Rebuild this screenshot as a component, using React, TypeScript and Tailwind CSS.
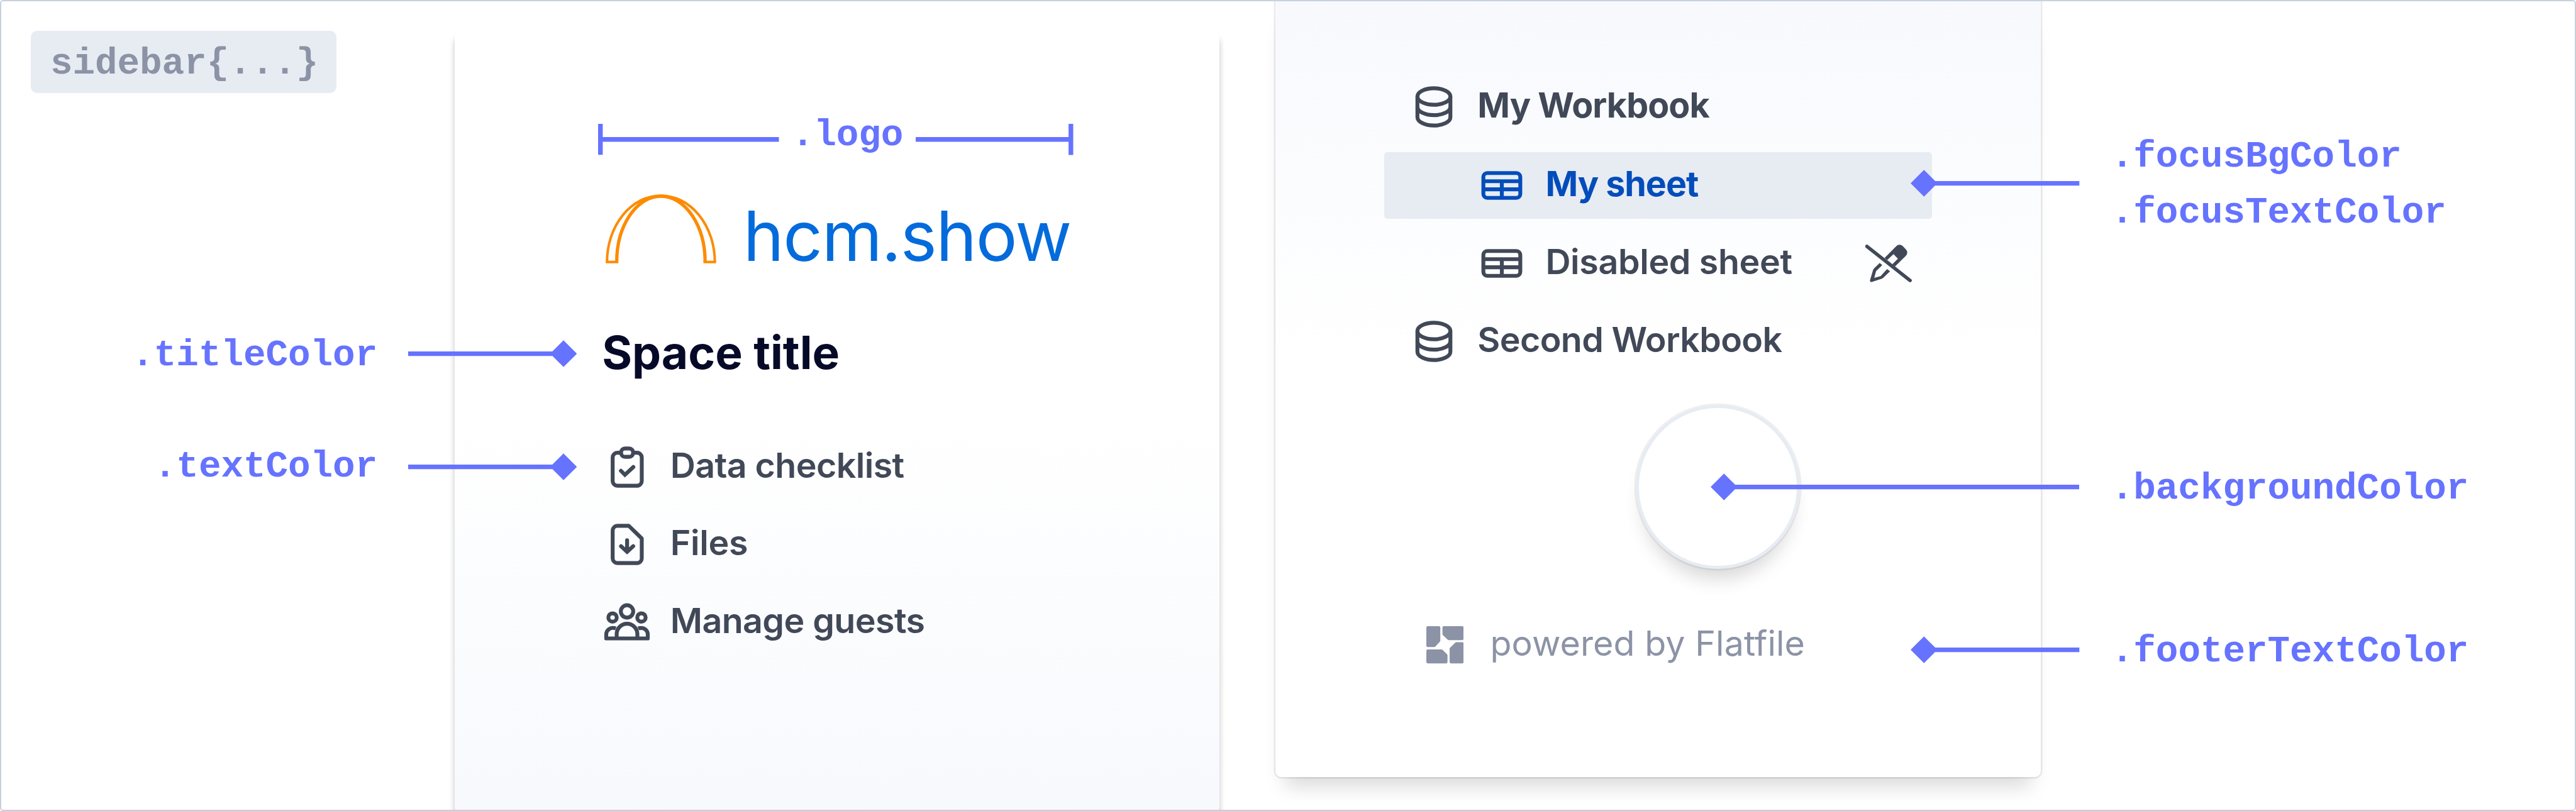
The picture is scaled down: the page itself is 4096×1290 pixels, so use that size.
import type { ReactNode } from "react";

const ICON = "h-[74px] w-[74px] shrink-0";

function ClipboardIcon() {
  return (
    <svg viewBox="0 0 120 120" className={ICON} fill="none" stroke="currentColor" strokeWidth="10" strokeLinecap="round">
      <path strokeLinecap="butt" d="M78 23H86a12 12 0 0 1 12 12V96a12 12 0 0 1-12 12H35a12 12 0 0 1-12-12V35a12 12 0 0 1 12-12H43" />
      <rect x="44.7" y="12" width="31" height="21.5" rx="10" />
      <path d="M44.3 69.5L54.6 79.8L76.3 59.8" />
    </svg>
  );
}

function FileIcon() {
  return (
    <svg viewBox="0 0 120 120" className={ICON} fill="none" stroke="currentColor" strokeWidth="10" strokeLinecap="round">
      <path strokeLinejoin="round" d="M35 12H64.5L98 44.5V96a12 12 0 0 1-12 12H35a12 12 0 0 1-12-12V24a12 12 0 0 1 12-12Z" />
      <path d="M60.2 49V78M44.5 64.5L60.2 79.2L76 64.5" />
    </svg>
  );
}

function GuestsIcon() {
  return (
    <svg viewBox="0 0 120 120" className={ICON} fill="none" stroke="currentColor" strokeWidth="10" strokeLinejoin="round">
      <circle cx="60" cy="33.3" r="16" />
      <circle cx="22.7" cy="49" r="10.8" />
      <circle cx="97.2" cy="49" r="10.8" />
      <path d="M33.3 103V92a26.7 27 0 0 1 53.4 0V103" />
      <path d="M31 77.3C18 72.5 6.4 81 6.4 93V103H113.5V93C113.5 81 102 72.5 89 77.3" />
    </svg>
  );
}

function WorkbookIcon() {
  return (
    <svg viewBox="0 0 120 120" className={ICON} fill="none" stroke="currentColor" strokeWidth="10">
      <ellipse cx="60" cy="33.3" rx="42.5" ry="21.3" />
      <path d="M17.5 60a42.5 21.3 0 0 0 85 0" />
      <path d="M17.5 33.3V86.7a42.5 21.3 0 0 0 85 0V33.3" />
    </svg>
  );
}

function SheetIcon() {
  return (
    <svg viewBox="0 0 120 120" className={ICON} fill="none" stroke="currentColor" strokeWidth="10">
      <rect x="12.4" y="28" width="95.2" height="64" rx="10" />
      <path d="M12 49H108M12 70H108M60 49V92" />
    </svg>
  );
}

function ReadOnlyIcon() {
  return (
    <svg viewBox="0 0 120 120" className={ICON} fill="currentColor">
      <path
        fillRule="evenodd"
        d="M49.7 46L78.7 16.7C84 10.3 92 10.3 97 16L104.7 24C109.2 29 109.2 35 104.7 40L76.3 68ZM72.7 36L84 47.7L69.7 62L56.7 51Z"
      />
      <path d="M37 58.7L43.7 64.3L27.7 80L23 97.3L39.3 92.7L56 74.7L63.7 80.3L47.3 96Q45 98.5 42.7 99.3L16.7 108Q11.5 108.3 12 103.3L19.7 77.7Q20.3 75 22 73.3Z" />
      <path d="M4 16L115.3 104" stroke="currentColor" strokeWidth="9" strokeLinecap="round" />
    </svg>
  );
}

function FlatfileIcon() {
  return (
    <svg viewBox="0 0 96 96" className="h-[59.2px] w-[59.2px] shrink-0" fill="currentColor" stroke="currentColor" strokeWidth="7" strokeLinejoin="round">
      <path d="M3.5 3.5H32.5V37.5L20.5 50.5H3.5Z" />
      <path d="M45 3.5H92.5V32.5H57.5L45 20.5Z" />
      <path d="M77 45H92.5V92.5H63.5V58Z" />
      <path d="M3.5 63.5H39L51 75V92.5H3.5Z" />
    </svg>
  );
}

function ArchLogo() {
  return (
    <svg viewBox="0 0 285 178" className="h-[109.8px] w-[175.8px] shrink-0" fill="none" stroke="#fd8b00">
      <path strokeWidth="6.5" d="M3.5 175A139 171.5 0 0 1 281.5 175" />
      <path strokeWidth="8.5" d="M28.5 175A114 170 0 0 1 256.5 175" />
      <path strokeWidth="6.5" d="M0.3 174.5H32.7M252.3 174.5H284.7" />
    </svg>
  );
}

/** Leader line that ends in a diamond at its right end. */
function LeaderRight() {
  return (
    <svg viewBox="0 0 435 70" className="ml-[48.7px] h-[43.2px] w-[268.3px] shrink-0" fill="#6673ff">
      <path d="M0 29H400V41H0ZM400.5 0.5L435 35L400.5 69.5L366 35Z" />
    </svg>
  );
}

/** Leader line that ends in a diamond at its left end. */
function LeaderLeft({ long = false }: { long?: boolean }) {
  return long ? (
    <svg viewBox="0 0 951 70" className="h-[43.2px] w-[586.6px] shrink-0" fill="#6673ff">
      <path d="M34.5 29H951V41H34.5ZM34.5 0.5L69 35L34.5 69.5L0 35Z" />
    </svg>
  ) : (
    <svg viewBox="0 0 435 70" className="h-[43.2px] w-[268.3px] shrink-0" fill="#6673ff">
      <path d="M34.5 29H435V41H34.5ZM34.5 0.5L69 35L34.5 69.5L0 35Z" />
    </svg>
  );
}

function Code({ children, className = "" }: { children: ReactNode; className?: string }) {
  return (
    <div className={`font-['Liberation_Mono',monospace] text-[59.22px] font-bold leading-[88.8px] whitespace-pre ${className}`}>
      {children}
    </div>
  );
}

function MenuItem({ icon, children, className }: { icon: ReactNode; children: ReactNode; className: string }) {
  return (
    <li className="flex h-[123.3px] items-center gap-[31.9px]">
      {icon}
      <span className={`mb-[5.8px] text-[55.5px] font-semibold leading-[74px] whitespace-nowrap ${className}`}>{children}</span>
    </li>
  );
}

function TreeRow({
  icon,
  label,
  labelClass,
  className,
  trailing,
}: {
  icon: ReactNode;
  label: string;
  labelClass: string;
  className: string;
  trailing?: ReactNode;
}) {
  return (
    <li className={`flex h-[106.1px] items-center rounded-[5px] pr-[31.9px] ${className}`}>
      {icon}
      <span className={`mb-[5.8px] ml-[32px] text-[55.5px] leading-[74px] whitespace-nowrap ${labelClass}`}>{label}</span>
      {trailing && <span className="ml-auto">{trailing}</span>}
    </li>
  );
}

export default function App() {
  return (
    <div className="flex h-[1290px] w-[4096px] overflow-hidden rounded-[5px] border-2 border-[#c8d1df] bg-white font-['Inter',sans-serif] text-[#414857]">
      {/* Labels left of the first sidebar */}
      <div className="relative z-10 flex w-[721px] shrink-0 flex-col">
        <Code className="mt-[47.3px] ml-[47.3px] h-[98.7px] w-[486px] rounded-[10px] bg-[#e7ecf3] pt-[9px] pl-[30.6px] text-[#8c93a6]">
          {"sidebar{...}"}
        </Code>
        <div className="mt-[369.9px] -mr-[194.2px] flex h-[88.8px] items-center self-end text-[#6673ff]">
          <Code className="mt-[7.8px]">.titleColor</Code>
          <LeaderRight />
        </div>
        <div className="mt-[91.3px] -mr-[194.2px] flex h-[88.8px] items-center self-end text-[#6673ff]">
          <Code className="mt-[3px]">.textColor</Code>
          <LeaderRight />
        </div>
      </div>

      {/* Upper part of the sidebar */}
      <section className="mt-[47.3px] h-[1244px] w-[1216px] shrink-0 rounded-[10px] bg-linear-to-b from-white from-50% to-[#f7f9fd] pt-[148.1px] pl-[228.2px] shadow-[0_11px_10px_rgba(0,0,0,0.24)]">
        <div className="flex h-[49.4px] items-center text-[#6673ff]">
          <svg viewBox="0 0 466 80" className="h-[49.4px] w-[287.5px]" fill="currentColor">
            <path d="M0 0H12V34H466V46H12V80H0Z" />
          </svg>
          <Code className="mr-[20px] mb-[11.6px] ml-[20px]">.logo</Code>
          <svg viewBox="0 0 406 80" className="h-[49.4px] w-[250.5px]" fill="currentColor">
            <path d="M406 0H394V34H0V46H394V80H406Z" />
          </svg>
        </div>

        <div className="mt-[62.7px] ml-[11.8px] flex h-[109.8px] items-center">
          <ArchLogo />
          <div className="mt-[24px] ml-[43px] text-[109.8px] font-normal leading-[109.8px] tracking-[-1.4px] text-[#036bdb]">hcm.show</div>
        </div>

        <h1 className="mt-[101.5px] ml-[6px] text-[73.1px] font-bold leading-[80px] text-[#060a28]">Space title</h1>

        <ul className="mt-[80.4px] ml-[8.7px] flex flex-col">
          <MenuItem icon={<ClipboardIcon />} className="tracking-[-0.57px]">Data checklist</MenuItem>
          <MenuItem icon={<FileIcon />} className="tracking-[-0.3px]">Files</MenuItem>
          <MenuItem icon={<GuestsIcon />} className="tracking-[-0.57px]">Manage guests</MenuItem>
        </ul>
      </section>

      {/* Lower part of the sidebar */}
      <section className="ml-[89.3px] h-[1234.2px] w-[1216.4px] shrink-0 rounded-b-[10px] bg-linear-to-b from-[#f7f9fd] to-white to-45% pt-[115.2px] shadow-[0_0_0_2.5px_rgba(0,0,0,0.08),0_30px_30px_-15px_rgba(0,0,0,0.15)]">
        <ul className="ml-[172.9px] flex w-[870.6px] flex-col gap-[18.4px]">
          <TreeRow icon={<WorkbookIcon />} label="My Workbook" labelClass="font-bold tracking-[-0.93px]" className="pl-[42.1px]" />
          <TreeRow
            icon={<SheetIcon />}
            label="My sheet"
            labelClass="font-bold tracking-[-1px]"
            className="bg-[#e7ecf3] pl-[150.2px] text-[#034dbb]"
          />
          <TreeRow
            icon={<SheetIcon />}
            label="Disabled sheet"
            labelClass="font-semibold tracking-[-0.35px]"
            className="pl-[150.2px]"
            trailing={<ReadOnlyIcon />}
          />
          <TreeRow icon={<WorkbookIcon />} label="Second Workbook" labelClass="font-semibold tracking-[-0.62px]" className="-mt-[1.2px] pl-[42.1px]" />
        </ul>

        <div className="mt-[48.1px] ml-[572.4px] size-[261.5px] rounded-full border-[5px] border-[#e7ecf3] bg-white shadow-[0_0_0_2.5px_rgba(0,0,0,0.06),0_27px_30px_-12px_rgba(0,0,0,0.16)]" />

        <div className="mt-[83.9px] ml-[239.4px] flex h-[74px] items-center text-[#8c93a6]">
          <FlatfileIcon />
          <span className="mb-[5.2px] ml-[42.6px] text-[55.5px] leading-[74px] tracking-[0.1px]">powered by Flatfile</span>
        </div>
      </section>

      {/* Labels right of the second sidebar */}
      <div className="relative z-10 flex flex-1 flex-col text-[#6673ff]">
        <div className="mt-[200.4px] -ml-[206.3px] flex h-[177.6px] items-center">
          <LeaderLeft />
          <div className="mt-[7.8px] ml-[50.1px]">
            <Code>.focusBgColor</Code>
            <Code>.focusTextColor</Code>
          </div>
        </div>
        <div className="mt-[350.4px] -ml-[524.9px] flex h-[88.8px] items-center">
          <LeaderLeft long />
          <Code className="mt-[7.8px] ml-[50.3px]">.backgroundColor</Code>
        </div>
        <div className="mt-[170.3px] -ml-[206.3px] flex h-[88.8px] items-center">
          <LeaderLeft />
          <Code className="mt-[7.8px] ml-[50.1px]">.footerTextColor</Code>
        </div>
      </div>
    </div>
  );
}
